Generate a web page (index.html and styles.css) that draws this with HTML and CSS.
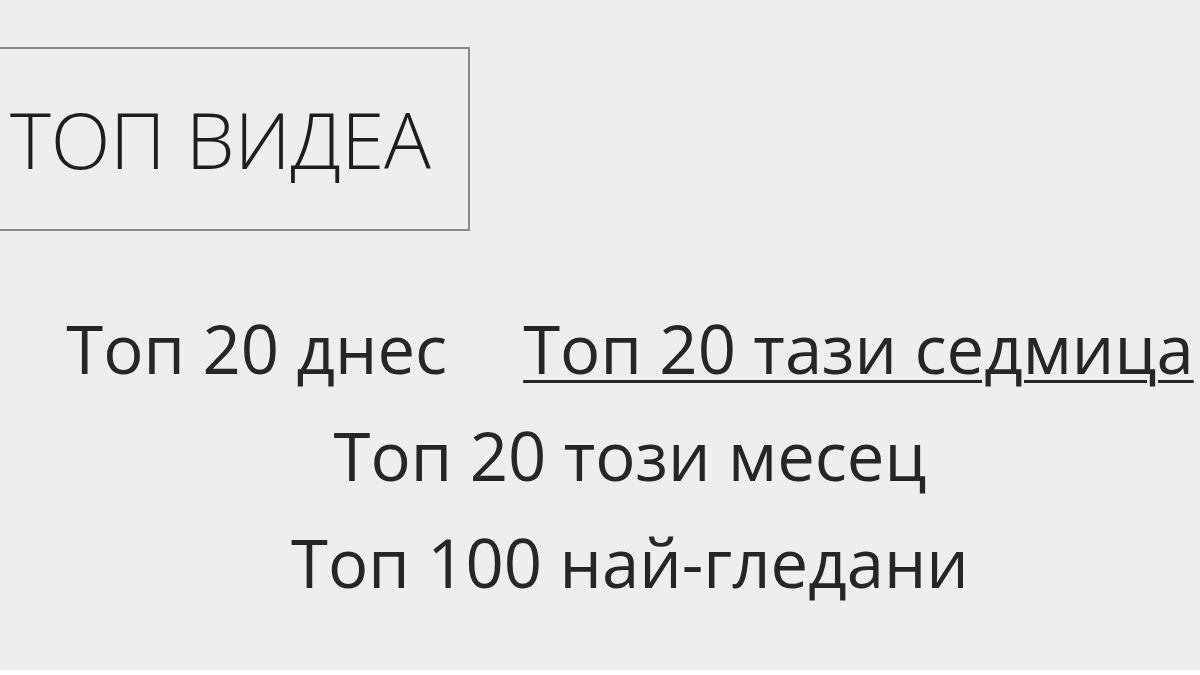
FILE: index.html
```html
<!DOCTYPE html>
<html lang="bg">
<head>
<meta charset="utf-8">
<title>Топ видеа</title>
<link rel="stylesheet" href="styles.css">
</head>
<body>
<div class="page">
  <header class="title-box">
    <h1 class="title">ТОП ВИДЕА</h1>
  </header>
  <nav class="top-nav">
    <a class="top-link" href="#">Топ 20 днес</a>
    <a class="top-link active" href="#">Топ 20 тази седмица</a>
    <a class="top-link" href="#">Топ 20 този месец</a>
    <a class="top-link" href="#">Топ 100 най-гледани</a>
  </nav>
</div>
</body>
</html>
```

FILE: styles.css
```css
html, body {
  margin: 0;
  padding: 0;
}
body {
  background: #ffffff;
  font-family: "Open Sans", "Noto Sans", sans-serif;
  color: #262626;
}
.page {
  background: #eeeeee;
  height: 670px;
  overflow: hidden;
  padding-top: 47px;
  box-sizing: border-box;
}
.title-box {
  width: 510px;
  height: 184px;
  margin-left: -40px;
  box-sizing: border-box;
  border: 2px solid #8a8a8a;
  display: flex;
  align-items: center;
  padding-left: 48px;
}
.title {
  margin: 0;
  font-weight: 300;
  font-size: 78px;
  line-height: 1;
  color: #1e1e1e;
  letter-spacing: -0.2px;
}
.top-nav {
  margin-top: 64px;
  padding-left: 60px;
  display: flex;
  flex-wrap: wrap;
  justify-content: center;
  column-gap: 76px;
  line-height: 107px;
}
.top-link {
  font-size: 67px;
  color: #262626;
  text-decoration: none;
  white-space: nowrap;
}
.top-link.active {
  text-decoration: underline;
  text-decoration-thickness: 3px;
  text-underline-offset: 6px;
}
```
